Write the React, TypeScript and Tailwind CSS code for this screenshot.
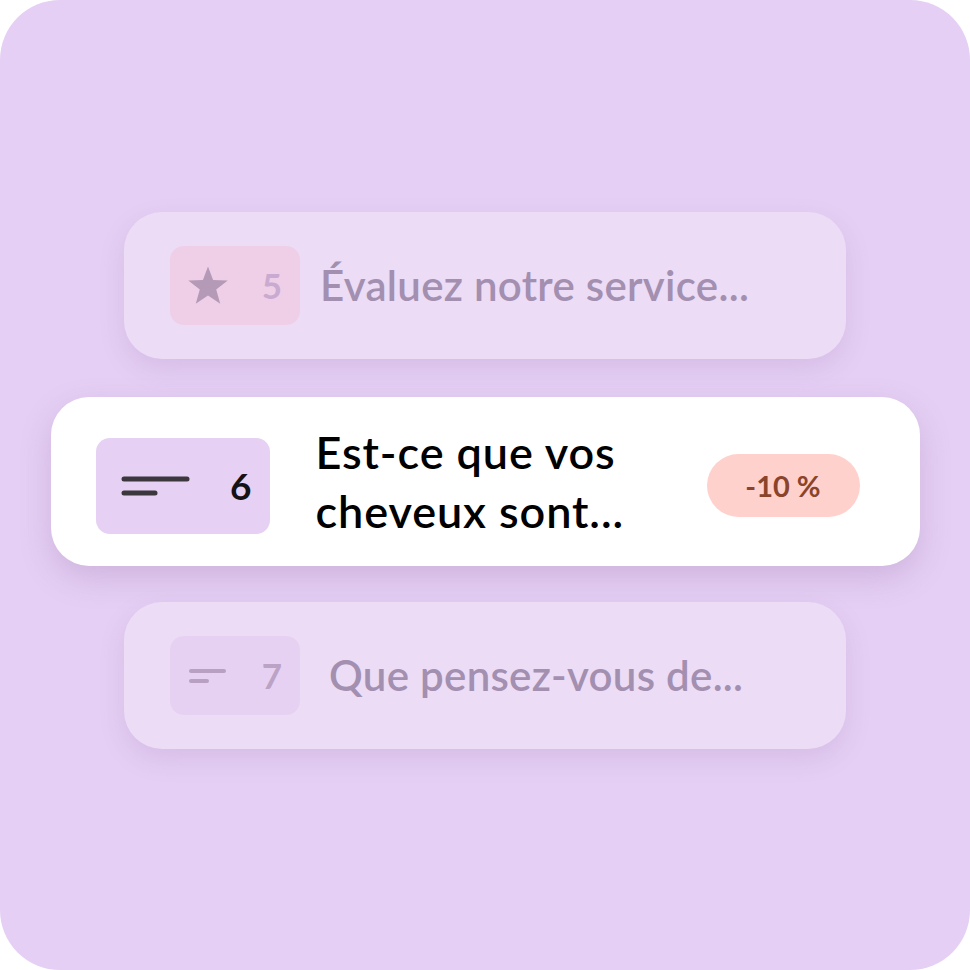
import React from "react";

const font = { fontFamily: "Lato, 'Open Sans', sans-serif" };

function LinesIcon({ big }: { big?: boolean }) {
  if (big) {
    return (
      <svg width="70" height="24" viewBox="0 0 70 24">
        <line x1="3" y1="5" x2="66" y2="5" stroke="#3b373c" strokeWidth="5" strokeLinecap="round" />
        <line x1="3" y1="19" x2="34" y2="19" stroke="#3b373c" strokeWidth="5" strokeLinecap="round" />
      </svg>
    );
  }
  return (
    <svg width="40" height="16" viewBox="0 0 40 16">
      <line x1="3" y1="3" x2="36" y2="3" stroke="#b8a0c2" strokeWidth="4" strokeLinecap="round" />
      <line x1="3" y1="13" x2="19" y2="13" stroke="#b8a0c2" strokeWidth="4" strokeLinecap="round" />
    </svg>
  );
}

function Star() {
  return (
    <svg width="44" height="42" viewBox="0 0 24 23">
      <path
        d="M12 0.8 L14.8 8.2 L22.8 8.5 L16.5 13.4 L18.7 21.2 L12 16.7 L5.3 21.2 L7.5 13.4 L1.2 8.5 L9.2 8.2 Z"
        fill="#b59ab7"
      />
    </svg>
  );
}

export default function App() {
  return (
    <div className="w-[970px] h-[970px] bg-white" style={font}>
      <div className="w-full h-full rounded-[60px] bg-[#e5cff4] flex flex-col items-center pt-[212px]">
        {/* card 5 */}
        <div className="w-[722px] h-[147px] rounded-[38px] bg-[#ecdcf6] shadow-[0_10px_24px_rgba(150,110,170,0.18)] flex items-center pl-[46px]">
          <div className="w-[130px] h-[79px] rounded-[14px] bg-[#efcfe8] flex items-center justify-between pl-[16px] pr-[18px]">
            <Star />
            <span className="text-[35px] font-bold text-[#c9aad0]">5</span>
          </div>
          <span className="ml-[20px] text-[42px] font-semibold text-[#a38fb0] tracking-[0.3px]">
            Évaluez notre service...
          </span>
        </div>

        {/* card 6 */}
        <div className="mt-[38px] w-[869px] h-[169px] rounded-[38px] bg-white shadow-[0_12px_30px_rgba(150,110,170,0.28)] flex items-center pl-[45px] pr-[60px]">
          <div className="mt-[8px] w-[174px] h-[96px] rounded-[14px] bg-[#e6d0f4] flex items-center justify-between pl-[25px] pr-[18px]">
            <LinesIcon big />
            <span className="text-[37px] font-bold text-[#141214]">6</span>
          </div>
          <div className="ml-[46px] text-[45px] leading-[59px] font-semibold text-black tracking-[0.9px]">
            <div>Est-ce que vos</div>
            <div>cheveux sont...</div>
          </div>
          <div className="mt-[8px] ml-auto w-[153px] h-[63px] rounded-full bg-[#ffd1cc] flex items-center justify-center text-[29px] font-bold text-[#8a442b]">
            -10 %
          </div>
        </div>

        {/* card 7 */}
        <div className="mt-[36px] w-[722px] h-[147px] rounded-[38px] bg-[#ecdcf6] shadow-[0_10px_24px_rgba(150,110,170,0.18)] flex items-center pl-[46px]">
          <div className="w-[130px] h-[79px] rounded-[14px] bg-[#e7d1f3] flex items-center justify-between pl-[18px] pr-[18px]">
            <LinesIcon />
            <span className="text-[35px] font-bold text-[#bba3c6]">7</span>
          </div>
          <span className="ml-[29px] text-[42px] font-semibold text-[#a38fb0] tracking-[0.3px]">
            Que pensez-vous de...
          </span>
        </div>
      </div>
    </div>
  );
}
